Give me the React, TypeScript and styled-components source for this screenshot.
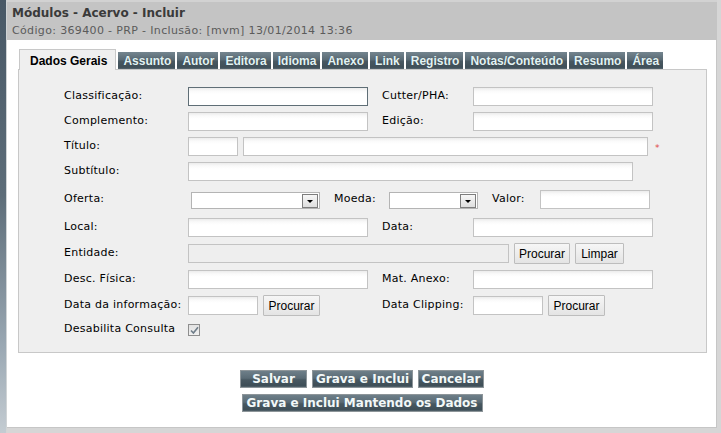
import styled, { createGlobalStyle } from "styled-components";

/* --------------------------------------------------------
   GLOBAL
-------------------------------------------------------- */
const GlobalStyle = createGlobalStyle`
  html, body {
    margin: 0;
    padding: 0;
    width: 721px;
    height: 433px;
    overflow: hidden;
  }
  body {
    background: linear-gradient(180deg, #485866 0%, #5d6d79 45%, #9aa8b3 80%, #c4ccd2 100%);
  }
  * { box-sizing: border-box; }
`;

/* --------------------------------------------------------
   STYLES
-------------------------------------------------------- */
const Page = styled.div`
  height: 433px;
  padding-left: 6px;
  display: flex;
`;

const Dialog = styled.div`
  flex: 1;
  display: flex;
  flex-direction: column;
  background: #fff;
  border-left: 1px solid #cfd3d5;
  border-right: 4px solid #d6d6d6;
  border-bottom: 5px solid #d6d6d6;
  box-shadow: inset -1px -1px 0 #c6c6c6;
`;

const TitleBar = styled.div`
  height: 40px;
  flex: none;
  background: #c4c4c4;
  border-top: 2px solid #d2d2d2;
  padding: 3px 0 0 5px;
  font-family: "DejaVu Sans", Verdana, sans-serif;
`;

const Title = styled.div`
  font-size: 12px;
  font-weight: bold;
  color: #3a3a3a;
  line-height: 16px;
`;

const SubTitle = styled.div`
  font-size: 11px;
  letter-spacing: 0.35px;
  color: #5b5b5b;
  line-height: 16px;
  margin-top: 2px;
`;

const Body = styled.div`
  flex: 1;
  padding: 9px 10px 0 11px;
`;

const TabStrip = styled.div`
  display: flex;
  align-items: flex-end;
  gap: 2px;
  padding-left: 1px;
  height: 20px;
  position: relative;
  z-index: 1;
`;

const Tab = styled.div<{ $active?: boolean }>`
  font-family: "Liberation Sans", Arial, sans-serif;
  font-size: 12px;
  font-weight: bold;
  display: flex;
  align-items: center;
  ${(p) =>
    p.$active
      ? `
    height: 21px;
    margin-bottom: -1px;
    padding: 1px 8px 0 10px;
    background: #efefef;
    color: #000;
    border: 1px solid #c8c8c8;
    border-bottom: none;
  `
      : `
    height: 17px;
    padding: 1px 4px 0 5px;
    color: #e2f3f4;
    background: linear-gradient(180deg, #74858f 0%, #5a6b75 45%, #485861 55%, #3f4f58 90%, #56666f 100%);
    text-shadow: 0 0 1px rgba(0,0,0,0.35);
  `}
`;

const Panel = styled.div`
  background: #efefef;
  border: 1px solid #c8c8c8;
  padding: 14px 0 12px 45px;
  height: 284px;
`;

const Row = styled.div<{ $h: number }>`
  display: flex;
  align-items: center;
  height: ${(p) => p.$h}px;
`;

const Label = styled.span<{ $w?: number }>`
  flex: none;
  width: ${(p) => p.$w ?? 124}px;
  font-family: "DejaVu Sans", Verdana, sans-serif;
  font-size: 11px;
  letter-spacing: 0.25px;
  color: #000;
  margin-top: -2px;
  white-space: nowrap;
`;

const Cell = styled.div<{ $w?: number }>`
  flex: none;
  width: ${(p) => (p.$w ? `${p.$w}px` : "auto")};
  display: flex;
  align-items: center;
  gap: 5px;
`;

const TextInput = styled.input<{ $w: number; $focus?: boolean; $off?: boolean }>`
  width: ${(p) => p.$w}px;
  height: 19px;
  margin: 0;
  padding: 0 2px;
  font-family: "DejaVu Sans", Verdana, sans-serif;
  font-size: 11px;
  border: 1px solid ${(p) => (p.$focus ? "#5f6e76" : "#c3c3c3")};
  background: ${(p) => (p.$off ? "#eeeeee" : "linear-gradient(180deg, #ececec 0, #fafafa 3px, #fff 6px)")};
  outline: none;
`;

const SelectBox = styled.div<{ $w: number }>`
  width: ${(p) => p.$w}px;
  height: 17px;
  margin-left: ${(p) => (p.$w > 100 ? 3 : 0)}px;
  margin-top: 2px;
  border: 1px solid #b4b4b4;
  background: #fff;
  display: flex;
  justify-content: flex-end;
  align-items: center;
  padding-right: 1px;
`;

const SelectArrow = styled.span`
  width: 16px;
  height: 14px;
  border: 1px solid #7d7d7d;
  background: linear-gradient(180deg, #f7f7f7, #dedede);
  display: flex;
  align-items: center;
  justify-content: center;
  padding-top: 2px;

  &::after {
    content: "";
    border-left: 3px solid transparent;
    border-right: 3px solid transparent;
    border-top: 3px solid #000;
  }
`;

const SmallButton = styled.button<{ $w: number }>`
  width: ${(p) => p.$w}px;
  height: 21px;
  margin: 0;
  padding: 0;
  font-family: "Liberation Sans", Arial, sans-serif;
  font-size: 12px;
  color: #000;
  background: linear-gradient(180deg, #f6f6f6, #e4e4e4);
  border: 1px solid #bdbdbd;
  border-radius: 1px;
`;

const Required = styled.span`
  color: #e04848;
  font-family: "DejaVu Sans", sans-serif;
  font-size: 9px;
  margin-left: 2px;
  margin-top: 3px;
`;

const CheckBox = styled.span`
  width: 12px;
  height: 12px;
  margin-top: 1px;
  border: 1px solid #8e8e8e;
  background: linear-gradient(180deg, #e2e2e2, #f0f0f0);
  display: flex;
  align-items: center;
  justify-content: center;
`;

const Actions = styled.div`
  display: flex;
  flex-direction: column;
  align-items: center;
  gap: 6px;
  margin-top: 17px;
  padding-right: 1px;
`;

const ActionRow = styled.div`
  display: flex;
  gap: 5px;
`;

const ActionButton = styled.button<{ $w: number }>`
  width: ${(p) => p.$w}px;
  height: 18px;
  margin: 0;
  padding: 0;
  font-family: "DejaVu Sans", Verdana, sans-serif;
  font-size: 12px;
  font-weight: bold;
  color: #f2f8f8;
  background: linear-gradient(180deg, #6e7f89 0%, #5a6b75 45%, #485861 55%, #3e4e57 90%, #52626b 100%);
  border: 1px solid #8d9599;
  border-radius: 0;
  white-space: nowrap;
`;

const tabs = ["Assunto", "Autor", "Editora", "Idioma", "Anexo", "Link", "Registro", "Notas/Conteúdo", "Resumo", "Área"];

export default function App() {
  return (
    <>
      <GlobalStyle />
      <Page>
        <Dialog>
          <TitleBar>
            <Title>Módulos - Acervo - Incluir</Title>
            <SubTitle>Código: 369400 - PRP - Inclusão: [mvm] 13/01/2014 13:36</SubTitle>
          </TitleBar>

          <Body>
            <TabStrip>
              <Tab $active>Dados Gerais</Tab>
              {tabs.map((t) => (
                <Tab key={t}>{t}</Tab>
              ))}
            </TabStrip>

            <Panel>
              <Row $h={25}>
                <Label>Classificação:</Label>
                <Cell $w={194}>
                  <TextInput $w={180} $focus />
                </Cell>
                <Label $w={91}>Cutter/PHA:</Label>
                <TextInput $w={180} />
              </Row>

              <Row $h={25}>
                <Label>Complemento:</Label>
                <Cell $w={194}>
                  <TextInput $w={180} />
                </Cell>
                <Label $w={91}>Edição:</Label>
                <TextInput $w={180} />
              </Row>

              <Row $h={25}>
                <Label>Título:</Label>
                <Cell>
                  <TextInput $w={50} />
                  <TextInput $w={405} />
                  <Required>*</Required>
                </Cell>
              </Row>

              <Row $h={25}>
                <Label>Subtítulo:</Label>
                <TextInput $w={445} />
              </Row>

              <Row $h={31}>
                <Label>Oferta:</Label>
                <Cell $w={146}>
                  <SelectBox $w={129}>
                    <SelectArrow />
                  </SelectBox>
                </Cell>
                <Label $w={55}>Moeda:</Label>
                <Cell $w={103}>
                  <SelectBox $w={89}>
                    <SelectArrow />
                  </SelectBox>
                </Cell>
                <Label $w={48}>Valor:</Label>
                <TextInput $w={110} />
              </Row>

              <Row $h={25}>
                <Label>Local:</Label>
                <Cell $w={194}>
                  <TextInput $w={180} />
                </Cell>
                <Label $w={91}>Data:</Label>
                <TextInput $w={180} />
              </Row>

              <Row $h={27}>
                <Label>Entidade:</Label>
                <Cell>
                  <TextInput $w={321} $off readOnly />
                  <SmallButton $w={56}>Procurar</SmallButton>
                  <SmallButton $w={49}>Limpar</SmallButton>
                </Cell>
              </Row>

              <Row $h={25}>
                <Label>Desc. Física:</Label>
                <Cell $w={194}>
                  <TextInput $w={180} />
                </Cell>
                <Label $w={91}>Mat. Anexo:</Label>
                <TextInput $w={180} />
              </Row>

              <Row $h={27}>
                <Label>Data da informação:</Label>
                <Cell $w={194}>
                  <TextInput $w={70} />
                  <SmallButton $w={57}>Procurar</SmallButton>
                </Cell>
                <Label $w={91}>Data Clipping:</Label>
                <Cell>
                  <TextInput $w={70} />
                  <SmallButton $w={57}>Procurar</SmallButton>
                </Cell>
              </Row>

              <Row $h={21}>
                <Label>Desabilita Consulta</Label>
                <CheckBox>
                  <svg width="9" height="9" viewBox="0 0 9 9">
                    <path d="M1 4.5 L3.4 7 L8 1.2" fill="none" stroke="#6f7d89" strokeWidth="1.6" />
                  </svg>
                </CheckBox>
              </Row>
            </Panel>

            <Actions>
              <ActionRow>
                <ActionButton $w={67}>Salvar</ActionButton>
                <ActionButton $w={101}>Grava e Inclui</ActionButton>
                <ActionButton $w={66}>Cancelar</ActionButton>
              </ActionRow>
              <ActionButton $w={241}>Grava e Inclui Mantendo os Dados</ActionButton>
            </Actions>
          </Body>
        </Dialog>
      </Page>
    </>
  );
}
